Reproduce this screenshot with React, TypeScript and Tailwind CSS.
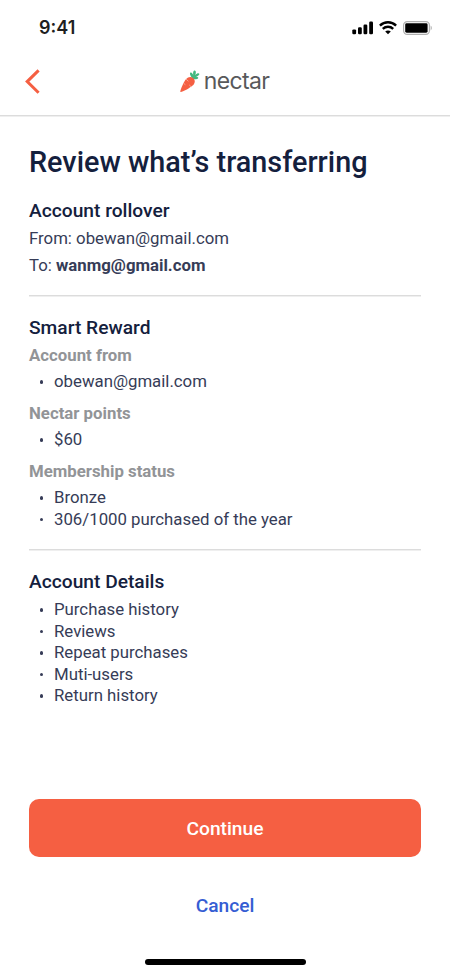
import React from 'react';

const StatusBar = () => {
  return (
    <div className="flex h-[56px] items-center justify-between pl-[39px] pr-[17px]">
      <span className="font-['Inter',sans-serif] text-[18px] font-semibold leading-6 text-[#1f1f1f]">9:41</span>
      <div className="flex items-center">
        {/* Signal */}
        <svg width="22" height="14" viewBox="0 0 22 14" fill="#000">
          <rect x="0.3" y="8.4" width="3.8" height="4.9" rx="1.2" />
          <rect x="6" y="6.3" width="3.8" height="7" rx="1.2" />
          <rect x="11.5" y="3.6" width="3.8" height="9.7" rx="1.2" />
          <rect x="17.2" y="0.5" width="3.8" height="12.8" rx="1.2" />
        </svg>
        {/* Wifi */}
        <svg className="ml-[5px]" width="18" height="14" viewBox="0 0 18 14" fill="none" stroke="#000" strokeWidth="2.4">
          <path d="M0.9 4.6C5.5 0.1 12.5 0.1 17.1 4.6" />
          <path d="M3.8 7.9C6.8 5.1 11.2 5.1 14.2 7.9" />
          <path d="M6.2 10.6C7.8 9 10.2 9 11.8 10.6L9 13.3Z" fill="#000" stroke="none" />
        </svg>
        {/* Battery */}
        <svg className="ml-[6px]" width="30" height="14" viewBox="0 0 30 14">
          <rect x="0.6" y="0.6" width="25.8" height="12.8" rx="3.6" fill="none" stroke="#b0b0b0" strokeWidth="1.2" />
          <rect x="2.2" y="2.3" width="22.4" height="9.4" rx="1.4" fill="#000" />
          <path d="M27.6 4.6C29.2 5.3 29.2 8.7 27.6 9.4Z" fill="#b0b0b0" />
        </svg>
      </div>
    </div>
  );
};

const Logo = () => {
  return (
    <div className="flex items-center">
      <svg width="20" height="23" viewBox="0 0 20 23">
        <path d="M12.1 8.2C10.2 5.8 9.4 3.4 10.4 2.6C11.6 1.9 12.8 3.6 13.3 5.4C12.9 3 13.1 0.5 14.6 0.5C16.3 0.6 16.1 3.2 15.2 5.2C16.9 3.3 18.7 2.8 19.3 3.8C19.8 5 17.6 6.3 15.8 6.8C17.4 6.7 18.6 7.4 18.2 8.2C17.4 9.3 14.6 9.4 13.2 8.9Z" fill="#43b97f" />
        <path d="M0.4 21.9C-0.2 20.8 3.4 12.2 6.1 9C8.3 6.7 11.2 6.3 13.3 8.3C15.4 10.3 15.2 13.2 12.6 15.6C9.5 18.4 1.4 22.7 0.4 21.9Z" fill="#f55f42" />
        <path d="M6.3 9.4L8.1 11M10.9 16.5L9.5 15.2M4 13.6L5.1 14.5" stroke="#fbb5a6" strokeWidth="0.8" strokeLinecap="round" />
      </svg>
      <span className="-mt-[1px] ml-[4px] font-['Inter',sans-serif] text-[23px] leading-7 tracking-[-0.65px] text-[#58595b]">nectar</span>
    </div>
  );
};

const List = ({ items }: { items: string[] }) => {
  return (
    <ul className="text-[16.8px] leading-[21.5px] text-[#363c57]">
      {items.map((item) => (
        <li key={item} className="flex items-center">
          <span className="ml-[10.5px] mr-[11px] h-[3.5px] w-[3.5px] rounded-full bg-[#363c57]" />
          {item}
        </li>
      ))}
    </ul>
  );
};

const App = () => {
  return (
    <div className="flex h-[975px] w-[450px] flex-col overflow-hidden bg-white font-['Roboto',sans-serif]">
      <StatusBar />
      <header className="grid h-[60px] grid-cols-3 items-center border-b border-[#dcdcdc] px-[25px] pb-[8px] shadow-[0_1px_0_#efefef]">
        <button aria-label="Back">
          <svg width="16" height="25" viewBox="0 0 16 25" fill="none" stroke="#f55f42" strokeWidth="3">
            <path d="M13.6 1.4L2.2 12.6L13.6 23.8" />
          </svg>
        </button>
        <div className="flex justify-center pr-[1px]">
          <Logo />
        </div>
      </header>

      <main className="flex grow flex-col px-[29px] pt-[27.5px]">
        <h1 className="text-[28.8px] font-medium leading-9 text-[#14203d]">Review what’s transferring</h1>

        {/* Account rollover */}
        <section className="mt-[19px] border-b border-[#dcdcdc] pb-[16px] shadow-[0_1px_0_#efefef]">
          <h2 className="text-[19.2px] font-medium leading-6 text-[#14203d]">Account rollover</h2>
          <div className="mt-[2px] text-[16.8px] leading-[27px] text-[#363c57]">
            <p>From: obewan@gmail.com</p>
            <p>To: <b className="font-bold">wanmg@gmail.com</b></p>
          </div>
        </section>

        {/* Smart Reward */}
        <section className="mt-[20.4px] border-b border-[#dcdcdc] pb-[18.5px] shadow-[0_1px_0_#efefef]">
          <h2 className="text-[19.2px] font-medium leading-6 text-[#14203d]">Smart Reward</h2>
          <h3 className="mb-[5.6px] mt-[4px] text-[16.8px] font-bold leading-[22px] text-[#929497]">Account from</h3>
          <List items={['obewan@gmail.com']} />
          <h3 className="mb-[5.6px] mt-[8.9px] text-[16.8px] font-bold leading-[22px] text-[#929497]">Nectar points</h3>
          <List items={['$60']} />
          <h3 className="mb-[5.6px] mt-[8.9px] text-[16.8px] font-bold leading-[22px] text-[#929497]">Membership status</h3>
          <List items={['Bronze', '306/1000 purchased of the year']} />
        </section>

        {/* Account Details */}
        <section className="mt-[20.5px]">
          <h2 className="mb-[5px] text-[19.2px] font-medium leading-6 text-[#14203d]">Account Details</h2>
          <List items={['Purchase history', 'Reviews', 'Repeat purchases', 'Muti-users', 'Return history']} />
        </section>
      </main>

      <footer className="flex flex-col items-center px-[29px] pb-[10px]">
        <button className="h-[58px] w-full rounded-[10px] bg-[#f55f42] pt-[2px] text-[19.2px] font-medium text-white">
          Continue
        </button>
        <button className="mt-[37px] text-[19.2px] font-medium leading-6 text-[#355dd3]">Cancel</button>
        <div className="mt-[41px] h-[6px] w-[161px] rounded-full bg-black" />
      </footer>
    </div>
  );
};

export default App;
